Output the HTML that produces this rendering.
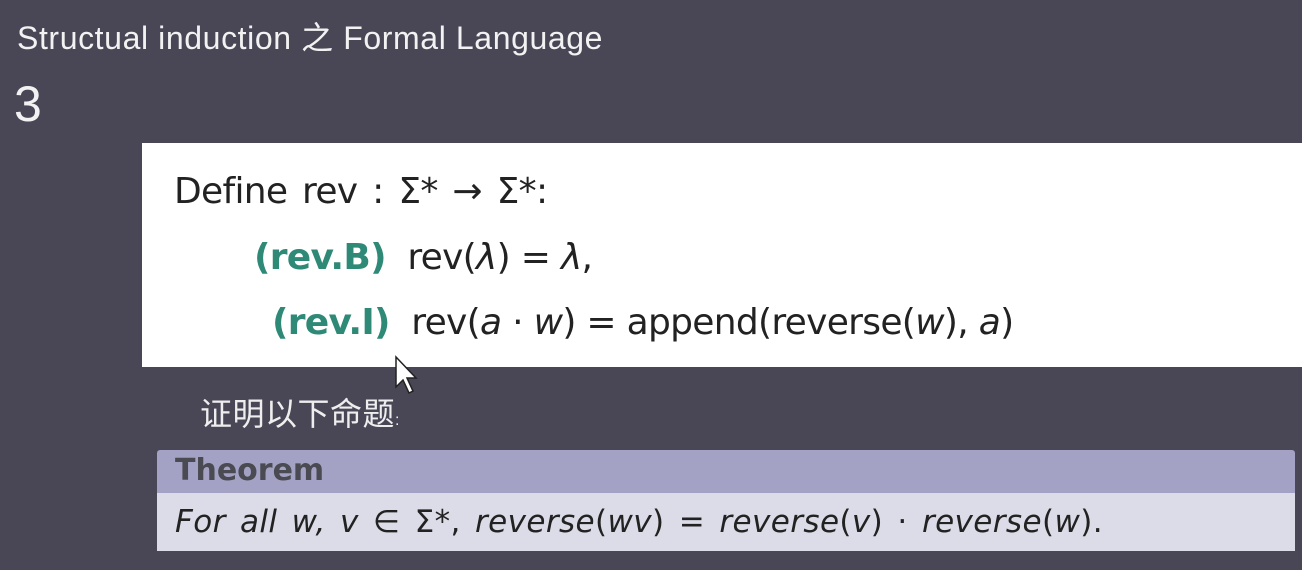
<!DOCTYPE html>
<html><head><meta charset="utf-8"><style>
body{margin:0;width:1302px;height:570px;background:#494756;overflow:hidden;position:relative;font-family:"Liberation Sans","Noto Sans CJK SC",sans-serif}
.t{position:absolute;color:#f2f2f2;white-space:nowrap}
.box{position:absolute;left:142px;top:143px;width:1160px;height:224px;background:#fff}
.m{position:absolute;color:#222;font-size:36px;white-space:nowrap;font-family:"DejaVu Sans","Liberation Sans",sans-serif;letter-spacing:-0.7px}
.g{color:#2e8a76;font-weight:bold}
i{font-style:italic}
.th{position:absolute;left:157px;top:450px;width:1138px;height:43px;background:#a3a2c4;border-radius:3px 3px 0 0}
.tb{position:absolute;left:157px;top:493px;width:1138px;height:58px;background:#dcdce8}
</style></head><body>
<div class="t" style="left:17px;top:13px;font-size:32px;letter-spacing:0.6px">Structual induction 之 Formal Language</div>
<div class="t" style="left:14px;top:75px;font-size:50px">3</div>
<div class="box"></div>
<div class="m" style="left:174px;top:171px;word-spacing:4px">Define rev : Σ* → Σ*:</div>
<div class="m" style="left:254px;top:237px"><span class="g">(rev.B)</span>&nbsp; rev(<i>λ</i>) = <i>λ</i>,</div>
<div class="m" style="left:272px;top:302px"><span class="g">(rev.I)</span>&nbsp; rev(<i>a</i> · <i>w</i>) = append(reverse(<i>w</i>), <i>a</i>)</div>
<div class="t" style="left:200px;top:389px;font-size:32px;color:#eee;letter-spacing:0.5px">证明以下命题<span style="font-size:16px">:</span></div>
<div class="th"></div><div class="tb"></div>
<div style="position:absolute;left:175px;top:453px;font-size:30px;font-weight:bold;color:#4a4a52;font-family:'DejaVu Sans',sans-serif">Theorem</div>
<div style="position:absolute;left:175px;top:504px;font-size:31px;color:#222;white-space:nowrap;font-family:'DejaVu Sans',sans-serif;font-style:italic;letter-spacing:0.4px;word-spacing:4px">For all w, v <span style="font-style:normal">∈ Σ*,</span> reverse<span style="font-style:normal">(</span>wv<span style="font-style:normal">) =</span> reverse<span style="font-style:normal">(</span>v<span style="font-style:normal">) ·</span> reverse<span style="font-style:normal">(</span>w<span style="font-style:normal">).</span></div>
<svg style="position:absolute;left:394px;top:355px" width="24" height="42"><path d="M2 2 L2 32 L9 25 L15 38 L19 36 L13 23 L22 23 Z" fill="#fff" stroke="#222" stroke-width="1.5"/></svg>
</body></html>
